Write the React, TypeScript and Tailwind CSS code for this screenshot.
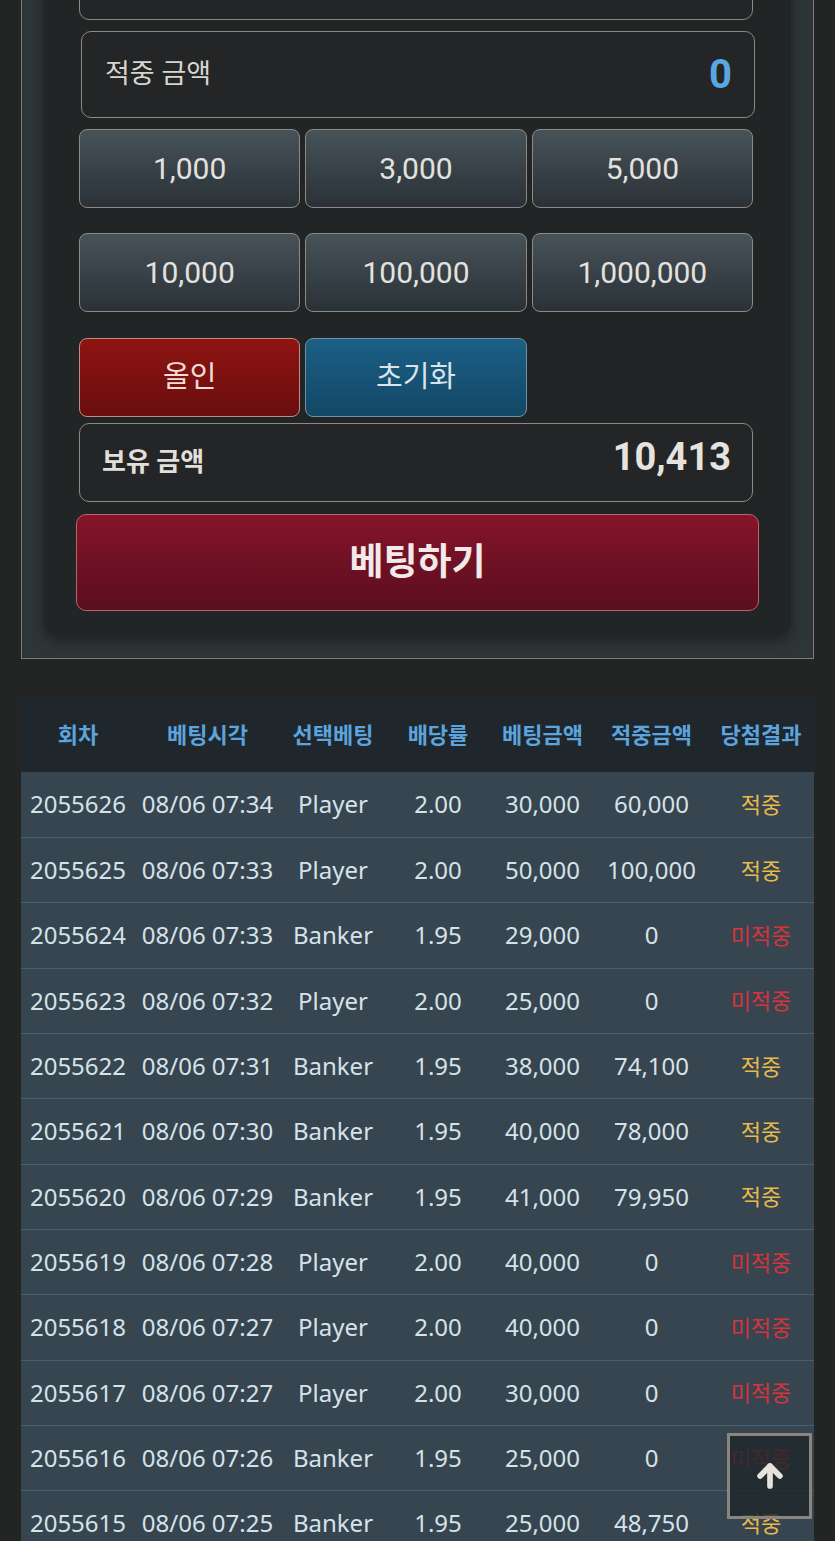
import { ArrowUp } from "lucide-react";

type Row = {
  round: string;
  time: string;
  pick: string;
  odds: string;
  bet: string;
  win: string;
  hit: boolean;
};

const rows: Row[] = [
  { round: "2055626", time: "08/06 07:34", pick: "Player", odds: "2.00", bet: "30,000", win: "60,000", hit: true },
  { round: "2055625", time: "08/06 07:33", pick: "Player", odds: "2.00", bet: "50,000", win: "100,000", hit: true },
  { round: "2055624", time: "08/06 07:33", pick: "Banker", odds: "1.95", bet: "29,000", win: "0", hit: false },
  { round: "2055623", time: "08/06 07:32", pick: "Player", odds: "2.00", bet: "25,000", win: "0", hit: false },
  { round: "2055622", time: "08/06 07:31", pick: "Banker", odds: "1.95", bet: "38,000", win: "74,100", hit: true },
  { round: "2055621", time: "08/06 07:30", pick: "Banker", odds: "1.95", bet: "40,000", win: "78,000", hit: true },
  { round: "2055620", time: "08/06 07:29", pick: "Banker", odds: "1.95", bet: "41,000", win: "79,950", hit: true },
  { round: "2055619", time: "08/06 07:28", pick: "Player", odds: "2.00", bet: "40,000", win: "0", hit: false },
  { round: "2055618", time: "08/06 07:27", pick: "Player", odds: "2.00", bet: "40,000", win: "0", hit: false },
  { round: "2055617", time: "08/06 07:27", pick: "Player", odds: "2.00", bet: "30,000", win: "0", hit: false },
  { round: "2055616", time: "08/06 07:26", pick: "Banker", odds: "1.95", bet: "25,000", win: "0", hit: false },
  { round: "2055615", time: "08/06 07:25", pick: "Banker", odds: "1.95", bet: "25,000", win: "48,750", hit: true },
];

const chips = ["1,000", "3,000", "5,000", "10,000", "100,000", "1,000,000"];

const cols = ["w-[114px]", "w-[145px]", "w-[106px]", "w-[104px]", "w-[105px]", "w-[113px]", "w-[106px]"];
const heads = ["회차", "베팅시각", "선택베팅", "배당률", "베팅금액", "적중금액", "당첨결과"];

function ChipButton({ label }: { label: string }) {
  return (
    <button className="h-[79px] rounded-[8px] border border-[#8e8981] bg-gradient-to-b from-[#475259] to-[#2a3237] text-[30px] text-[#e4e2de]">
      {label}
    </button>
  );
}

export default function App() {
  return (
    <div className="relative min-h-[1541px] overflow-hidden bg-[#232524] px-[21px] font-['Roboto','Noto_Sans_CJK_KR',sans-serif]">
      {/* bet panel */}
      <div className="-mt-[61px] border border-[#7f7b75] bg-[#2e3537] px-[22px] pb-[23px]">
        <div className="rounded-b-[14px] bg-[#222526] pb-[24px] pl-[35px] pr-[38px] shadow-[0_6px_12px_rgba(0,0,0,0.35)]">
          <div className="h-[80px] rounded-b-[10px] border border-[#8e8981] bg-[#232526]" />

          <div className="ml-[2px] -mr-[2px] mt-[11px] flex h-[87px] items-center justify-between rounded-[10px] border border-[#8e8981] bg-[#232526] pl-[23px] pr-[22px]">
            <span className="-mt-[1px] text-[27px] text-[#d8d5d0]">적중 금액</span>
            <span className="text-[40px] font-bold leading-none text-[#5aa6e0]">0</span>
          </div>

          <div className="mt-[11px] grid grid-cols-3 gap-x-[5px] gap-y-[25px]">
            {chips.map((c) => (
              <ChipButton key={c} label={c} />
            ))}
          </div>

          <div className="mt-[26px] grid grid-cols-3 gap-x-[5px]">
            <button className="h-[79px] rounded-[8px] border border-[#c48a84] bg-gradient-to-b from-[#8e1412] to-[#6a0e0e] text-[29px] text-[#f1dcd8]">
              올인
            </button>
            <button className="h-[79px] rounded-[8px] border border-[#6d92a3] bg-gradient-to-b from-[#1b6086] to-[#134766] text-[29px] text-[#dbe4ea]">
              초기화
            </button>
          </div>

          <div className="mt-[6px] flex h-[79px] items-center justify-between rounded-[10px] border border-[#8e8981] bg-[#232526] pl-[22px] pr-[21px]">
            <span className="text-[26px] font-bold text-[#e2dfdb]">보유 금액</span>
            <span className="-mt-[10px] text-[38px] font-bold text-[#e6e3de]">10,413</span>
          </div>

          <button className="-ml-[3px] mt-[12px] h-[97px] w-[calc(100%+9px)] rounded-[10px] border border-[#b9636f] bg-gradient-to-b from-[#86142b] to-[#5a0e1e] text-[37px] font-bold text-[#f3e9e9]">
            베팅하기
          </button>
        </div>
      </div>

      {/* history table */}
      <table className="mt-[38px] w-full table-fixed border-collapse font-['Noto_Sans','Noto_Sans_CJK_KR',sans-serif]">
        <colgroup>
          {cols.map((c, i) => (
            <col key={i} className={c} />
          ))}
        </colgroup>
        <thead>
          <tr className="h-[75px] bg-[#1f262c]">
            {heads.map((h) => (
              <th key={h} className="text-center text-[22px] font-bold text-[#5ba4dd]">
                {h}
              </th>
            ))}
          </tr>
        </thead>
        <tbody>
          {rows.map((r) => (
            <tr key={r.round} className="h-[65.35px] border-b border-[#42606f] bg-[#36454f] text-center text-[24px] text-[#d6e2ea]">
              <td>{r.round}</td>
              <td>{r.time}</td>
              <td>{r.pick}</td>
              <td>{r.odds}</td>
              <td>{r.bet}</td>
              <td>{r.win}</td>
              <td className={r.hit ? "text-[22px] text-[#e8b94b]" : "text-[22px] text-[#d8343c]"}>
                {r.hit ? "적중" : "미적중"}
              </td>
            </tr>
          ))}
        </tbody>
      </table>

      {/* scroll to top */}
      <button className="absolute left-[727px] top-[1433px] flex h-[86px] w-[85px] items-center justify-center border-[3px] border-[#8a857e] bg-[#1f2529]/80">
        <ArrowUp size={34} strokeWidth={4} className="text-[#e6e3de]" />
      </button>
    </div>
  );
}
